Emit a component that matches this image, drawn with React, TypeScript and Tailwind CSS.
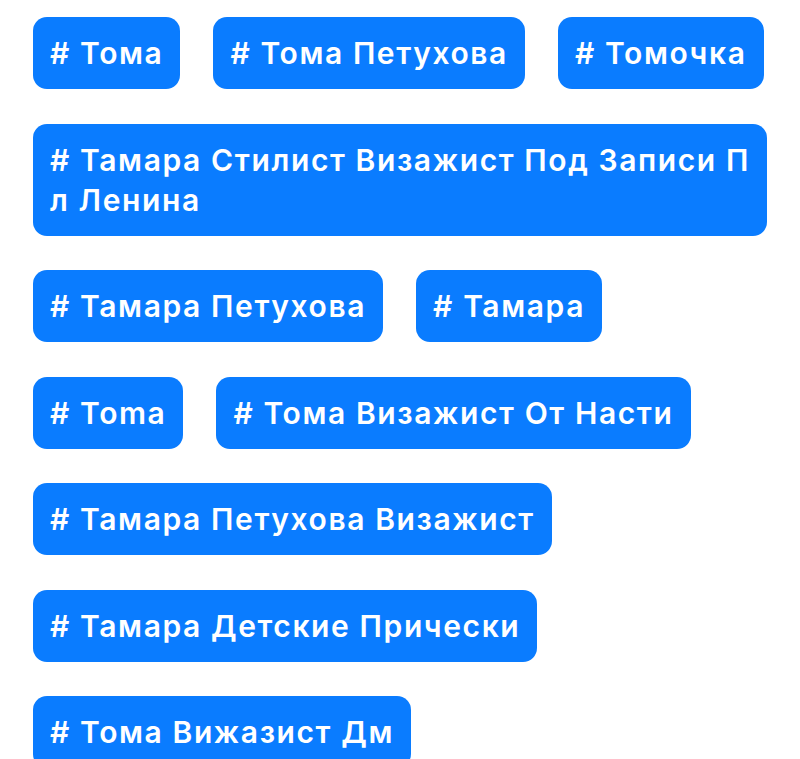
const tags = [
  "Тома",
  "Тома Петухова",
  "Томочка",
  "Тамара Стилист Визажист Под Записи П л Ленина",
  "Тамара Петухова",
  "Тамара",
  "Toma",
  "Тома Визажист От Насти",
  "Тамара Петухова Визажист",
  "Тамара Детские Прически",
  "Тома Вижазист Дм",
];

export default function App() {
  return (
    <div className="min-h-screen bg-white overflow-hidden font-['Inter',sans-serif]">
      <div className="flex flex-wrap gap-x-[33px] gap-y-[34.5px] px-[33px] pt-[17px]">
        {tags.map((tag) => (
          <div
            key={tag}
            className="rounded-[14px] bg-[#0a7cff] px-[17px] py-4 text-[30px] font-semibold leading-[40px] tracking-[1.6px] text-white"
          >
            # {tag}
          </div>
        ))}
      </div>
    </div>
  );
}
